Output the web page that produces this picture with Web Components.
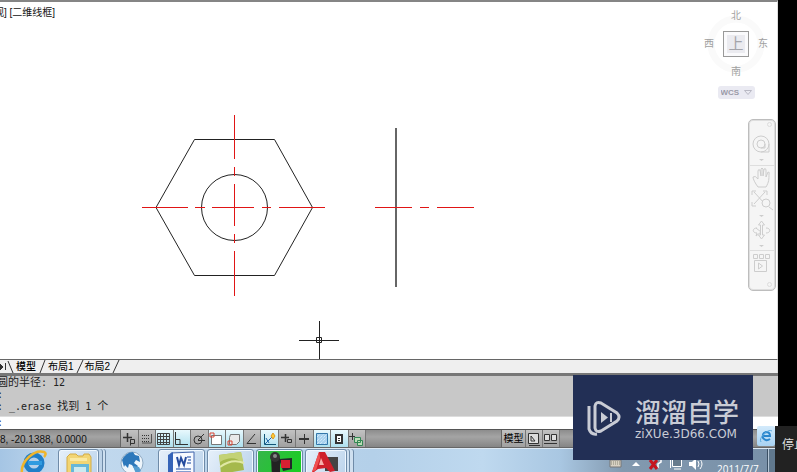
<!DOCTYPE html>
<html lang="zh-CN">
<head>
<meta charset="utf-8">
<title>CAD</title>
<style>
html, body { margin: 0; height: 100%; overflow: hidden; background: #000; }
body { font-family: "Liberation Sans", "Noto Sans CJK SC", sans-serif; font-size: 10px; color: #111; }
</style>
</head>
<body>
<cad-desktop>
  <drawing-view></drawing-view>
  <layout-tabs></layout-tabs>
  <command-panel></command-panel>
  <status-bar></status-bar>
  <task-bar></task-bar>
  <brand-card slot="overlay"></brand-card>
  <browser-badge slot="overlay"></browser-badge>
  <recorder-tip slot="overlay"><button>停止</button></recorder-tip>
</cad-desktop>

<script>
const define = (name, html) => customElements.define(name, class extends HTMLElement {
  constructor() {
    super();
    this.attachShadow({ mode: 'open' }).innerHTML =
      '<style>:host,*{box-sizing:border-box}button,input,select{font:inherit;color:inherit;margin:0;padding:0;border:0;background:none;appearance:none;outline:0}svg{display:block}</style>' + html;
  }
});

define('cad-desktop', `
<style>
:host { display: grid; grid-template-columns: 1fr 19px; height: 100vh; position: relative; overflow: hidden; background: #000; }
main { display: flex; flex-direction: column; min-width: 0; overflow: hidden; }
</style>
<main><slot></slot></main><slot name="overlay"></slot>`);

define('view-cube', `
<style>
:host { display: grid; grid-template-columns: 18px 34px 18px; grid-template-rows: 16px 28px 16px; gap: 6px 1px; place-items: center; position: absolute; top: 6px; right: 5px; width: 72px; color: #a0a0a0; }
svg.ring { position: absolute; left: 7px; top: 7px; }
button { position: relative; line-height: 14px; }
.n, .s { grid-column: 1 / 4; }
.top { width: 26px; height: 26px; border: 1px solid #999; background: #fafafc; display: grid; place-items: center; font-size: 15px; color: #a4a4aa; }
.top span { background: #ebebf0; line-height: 18px; width: 18px; }
label { grid-column: 1 / 4; position: relative; display: block; width: 37px; height: 13px; background: #eaeaf2; border-radius: 3px; }
select { width: 37px; height: 13px; padding-left: 3px; font-size: 8px; font-weight: bold; line-height: 13px; color: #9b9ba8; display: block; }
label svg { position: absolute; right: 3px; top: 3px; pointer-events: none; }
</style>
<svg class="ring" width="58" height="58" fill="none"><circle cx="29" cy="29" r="25" stroke="#fafafa" stroke-width="7"/></svg>
<button class="n">北</button><button>西</button><button class="top"><span>上</span></button><button>东</button><button class="s">南</button>
<label><select aria-label="坐标系"><option>WCS</option></select><svg width="8" height="7" fill="none" stroke="#b9b9c4"><path d="M.5 1.5h7L4 5.5z"/></svg></label>`);

define('nav-bar', `
<style>
:host { display: flex; flex-direction: column; align-items: center; position: absolute; right: 1px; top: 119px; width: 28px; padding: 14px 0 16px; border: 1px solid #bdbdbd; box-shadow: inset 0 0 0 1px #dedede; border-radius: 5px; background: #f5f5f5; }
button { display: block; }
hr { width: 24px; border: 0; border-top: 1px solid #dedede; margin: 0; }
svg { fill: none; stroke: #cdcdcd; }
i { position: absolute; right: 3px; width: 5px; height: 5px; border: 1px solid #ddd; border-radius: 50%; }
i.a { top: 2px; } i.b { bottom: 3px; }
</style>
<i class="a"></i>
<button aria-label="控制盘"><svg width="24" height="20"><circle cx="11" cy="10" r="8"/><circle cx="11" cy="10" r="4"/><path d="M19 10v8h-8M15 10v4h-4"/></svg></button>
<button aria-label="控制盘选项"><svg width="24" height="11"><path d="M9 5h5l-2.500 2z" fill="#ccc" stroke="none"/></svg></button>
<hr>
<button aria-label="平移"><svg width="24" height="23"><path d="M8 21C5 17 3 13 3 11q2-2 5 2V5q0-2 2-1l1 6V3q1-2 2 0v7l1-7q2-1 2 1v7l2-5q2 0 1 2c0 5 0 8-3 13z"/></svg></button>
<button aria-label="缩放"><svg width="24" height="22"><path d="M4 3l11 12M4 15L15 3M2 6V2h4M13 2h4v4M2 13v4h4M19 18l4 3"/><circle cx="16" cy="14" r="4" fill="#f5f5f5"/></svg></button>
<button aria-label="缩放选项"><svg width="24" height="9"><path d="M9 4h5l-2.500 2z" fill="#ccc" stroke="none"/></svg></button>
<button aria-label="动态观察"><svg width="24" height="20"><path d="M11.500 1l3 4h-2v10h2l-3 4-3-4h2V5h-2zM7 8c-5 0-5 5 0 5l-1 3 5-4-5-4M16 8c5 0 5 5 0 5"/></svg></button>
<button aria-label="观察选项"><svg width="24" height="10"><path d="M9 5h5l-2.500 2z" fill="#ccc" stroke="none"/></svg></button>
<hr>
<button aria-label="运动"><svg width="24" height="23"><path d="M3.500 3.500h4v4h-4zM9.500 3.500h4v4h-4zM15.500 3.500h4v4h-4zM4.500 9.500h12v11h-12zM8.500 12v6l4-3z"/></svg></button>
<i class="b"></i>`);

define('drawing-view', `
<style>
:host { display: block; flex: 1; min-height: 0; position: relative; overflow: hidden; background: #fff; border-top: 2px solid #858585; border-right: 1px solid #ddd; }
p { margin: 0; position: absolute; left: -6px; top: 4px; line-height: 14px; white-space: nowrap; }
.sheet { position: absolute; left: 0; top: -2px; width: 100%; height: 361px; fill: none; }
nav-bar { top: 117px; }
</style>
<svg class="sheet" aria-label="六角螺母">
<path d="M194.500 139.500h80l38 68-38 68h-80l-38.500-68z" stroke="#222"/><circle cx="234.500" cy="207.500" r="33" stroke="#222"/>
<path d="M396 128v159" stroke="#666" stroke-width="2"/>
<path d="M142 207.500h46M195 207.500h10M212 207.500h42M262 207.500h9M279 207.500h46" stroke="#e01515"/>
<path d="M234.500 115v44M234.500 167v9M234.500 184v42M234.500 234v9M234.500 251v45" stroke="#e01515"/>
<path d="M375 207.500h37M420 207.500h9M437 207.500h37" stroke="#e01515"/>
<path d="M299 340.500h40M319.500 321v38M316.500 337.500h5v5h-5z" stroke="#222"/>
</svg>
<p>观] [二维线框]</p>
<view-cube></view-cube><nav-bar></nav-bar>`);

define('layout-tabs', `
<style>
:host { display: flex; flex: none; align-items: center; height: 14px; overflow: hidden; background: #efefef; border-top: 1px solid #666; border-right: 1px solid #ddd; }
button { line-height: 13px; white-space: nowrap; color: #000; }
svg { fill: none; stroke: #333; flex: none; }
.first { font-weight: 500; }
</style>
<button aria-label="最后"><svg width="16" height="13"><path d="M0 4l3 3-3 3z" fill="#333"/><path d="M5.500 3v7M8 1l5 12"/></svg></button>
<button class="first">模型</button><svg width="12" height="13"><path d="M4 13L9 0"/></svg>
<button>布局1</button><svg width="11" height="13"><path d="M3 13L9 0"/></svg>
<button>布局2</button><svg width="12" height="13"><path d="M3 13L9 0"/></svg>`);

define('command-panel', `
<style>
:host { display: block; flex: none; border-top: 3px solid #777; font-size: 11px; line-height: 12px; color: #222; }
.log { background: #c8c8c8; height: 40px; overflow: hidden; }
p { margin: 0 0 0 -3px; white-space: pre; height: 12px; }
code { font: 10px/12px "DejaVu Sans Mono", monospace; }
label { display: flex; height: 13px; background: #fff; align-items: center; border-top: 1px solid #ddd; color: #336; }
label code { margin-left: -3px; }
input { flex: 1; min-width: 0; height: 12px; }
</style>
<div class="log"><p>圆的半径<code>: 12</code></p><p><code>:</code></p><p><code>: _.erase </code>找到<code> 1 </code>个</p></div>
<label><code>:</code><input aria-label="命令"></label>`);

define('status-bar', `
<style>
:host { display: flex; flex: none; height: 19px; background: linear-gradient(#8d8d8d, #a4a4a4 40%, #858585); border-top: 1px solid #555; border-bottom: 1px solid #666; color: #111; overflow: hidden; }
output { width: 120px; line-height: 19px; white-space: nowrap; }
.tools { display: grid; grid-template-columns: repeat(14, 1fr); width: 246px; border-left: 1px solid #666; }
button { border-right: 1px solid #777; background: linear-gradient(#c2c2c2, #a0a0a0); display: grid; place-items: center; overflow: hidden; }
button.on { background: linear-gradient(#e8f8fd, #aee0ee); }
svg { fill: none; stroke: #333; }
.space { flex: 1; }
.right { display: flex; margin-right: 218px; border-left: 1px solid #666; }
.right button { width: 17px; } .right .model { width: 24px; color: #000; line-height: 16px; white-space: nowrap; }
</style>
<output>8, -20.1388, 0.0000</output>
<div class="tools">
<button aria-label="推断约束"><svg width="14" height="14"><path d="M1 5.500h9M5.500 1v9" stroke-width="1.500"/><path d="M8.500 7.500h4v4h-4zv6"/></svg></button>
<button aria-label="捕捉"><svg width="14" height="14" stroke-dasharray="1 1"><path d="M2 3.500h8M2 6.500h8M2 9.500h8" /><path d="M11.500 2v9H2" stroke-dasharray="none" stroke="#555"/></svg></button>
<button class="on" aria-label="栅格"><svg width="14" height="14"><path d="M.5 1.500h12v11h-12zM3.500 1v12M6.500 1v12M9.500 1v12M0 4.500h12M0 7.500h12M0 10.500h12" stroke="#444"/></svg></button>
<button class="on" aria-label="正交"><svg width="15" height="14" stroke="#178"><path d="M1.500 0v12.500H14M1 7.500h5v5"/></svg></button>
<button aria-label="极轴"><svg width="14" height="14"><circle cx="6" cy="8" r="4"/><path d="M6 8l6-6M6 8.500h7"/></svg></button>
<button class="on" aria-label="对象捕捉"><svg width="15" height="14"><path d="M2.500 3.500h10v9h-10z" fill="#fff" stroke="#777"/><path d="M1 1h4v4H1z" stroke="#d43"/></svg></button>
<button class="on" aria-label="三维捕捉"><svg width="15" height="14"><path d="M3.500 2.500h9v7l-3 3h-7v-7z" fill="#e9e9e9" stroke="#777"/><path d="M1 9h4v4H1z" stroke="#d43"/></svg></button>
<button aria-label="对象追踪"><svg width="14" height="14"><path d="M10 2L2 11.500h9"/></svg></button>
<button class="on" aria-label="动态坐标"><svg width="15" height="14"><path d="M2.500 2v10.500H14" stroke="#157"/><path d="M3 12l8-8M4 6l3 5" stroke="#26a"/><path d="M11 1l2 3-2 3-2-3z" fill="#fc3" stroke="#d92"/></svg></button>
<button aria-label="动态输入"><svg width="14" height="14"><path d="M1 5.500h8M5.500 2v8" stroke-width="1.500"/><path d="M7.500 7.500h4v3h-4z"/></svg></button>
<button aria-label="线宽"><svg width="14" height="14"><path d="M2 7h10" stroke-width="2"/><path d="M7.500 2v10"/></svg></button>
<button class="on" aria-label="透明度"><svg width="14" height="14"><path d="M1.500 1.500h11v11h-11z" fill="#a9d2ef" stroke="#37a"/><path d="M2 5l3-3M2 9l7-7M2 12L12 2M5 12l7-7M9 12l3-3" stroke="#e7f7ff" stroke-dasharray="1 1"/></svg></button>
<button class="on" aria-label="快捷特性"><svg width="14" height="14"><path d="M4 3h6v8H4z" fill="#fff" stroke-width="2"/><path d="M6 6.500h2M6 8.500h2"/></svg></button>
<button aria-label="选择循环"><svg width="15" height="14"><path d="M0 4.500h6M3.500 1v7"/><path d="M5.500 5.500h6v5h-6zM8.500 8.500h5v5h-5z" fill="#bcdcb7" stroke="#385"/></svg></button>
</div>
<span class="space"></span>
<div class="right"><button class="model">模型</button><button aria-label="布局"><svg width="14" height="14"><path d="M1.500 1.500h10v10h-10z" fill="#ddd"/><path d="M4 4l4 5M4 4v5h4M2 13.500h11"/></svg></button><button aria-label="快速查看"><svg width="14" height="14"><path d="M.5 2.500h5v6h-5zM7.500 2.500h5v6h-5z" fill="#ddd"/><path d="M0 11.500h13"/></svg></button></div>`);

define('task-bar', `
<style>
:host { display: flex; flex: none; height: 24px; overflow: hidden; background: linear-gradient(90deg, #a5c5e4 0, #c2d9ee 8%, #b4d0e9 48%, #bfd9ef 62%, #a9c7e2 72%, #8299af 80%, #7890a8); border-top: 1px solid #dce9f5; }
nav { display: flex; gap: 2px; padding-left: 10px; }
button { height: 36px; width: 47px; display: flex; justify-content: center; flex: none; }
.app { border: 1px solid #6f8ba8; border-radius: 3px; box-shadow: inset 0 0 0 1px #eff7ff; background: linear-gradient(120deg, #e6f0fa, #b8d1ea); }
.folder { width: 41px; margin-left: -1px; box-shadow: inset 0 0 0 1px #eff7ff, 3px 0 #bdd3e8, 4px 0 #6f8ba8, 6px 0 #cfe0f0, 7px 0 #6f8ba8; }
.globe { margin: 0 1px 0 7px; }
.rec { background: linear-gradient(120deg, #37b54b, #14d21c); }
.cad { width: 42px; box-shadow: inset 0 0 0 1px #eff7ff, 2px 0 #cfe0f0, 3px 0 #6f8ba8, 6px 0 #cfe0f0, 7px 0 #6f8ba8; }
aside { margin-left: auto; display: flex; color: #fff; }
.tray { width: 20px; height: 24px; }
time { width: 62px; padding: 14px 0 0 12px; font: 10px/12px "Open Sans", sans-serif; white-space: nowrap; }
.show { width: 11px; background: #60788d; border-left: 1px solid #3b5064; box-shadow: inset 1px 0 #b7c8d8; }
</style>
<nav>
<button aria-label="Internet Explorer"><svg width="30" height="30"><circle cx="15" cy="14" r="8" fill="none" stroke="#1f7fc9" stroke-width="5"/><path d="M9 14h14" stroke="#2f9be0" stroke-width="4"/><path d="M3 25C1 12 16 0 25 3c3 1 1 4 0 5" fill="none" stroke="#efb52c" stroke-width="2.500"/></svg></button>
<button class="app folder" aria-label="资源管理器"><svg width="28" height="30"><path d="M2 7l3-3h6l2 2h5l1-2h5l2 3v22H2z" fill="#f2d574" stroke="#d3ab45"/><path d="M5 8h17v3H5z" fill="#fae9a2"/><path d="M6 14h18v14H6z" fill="#66b7d9"/><path d="M9 17h12v9H9z" fill="#cceaf0"/></svg></button>
<button class="globe" aria-label="浏览器"><svg width="28" height="28"><circle cx="14" cy="14" r="11" fill="#eef5fb" stroke="#8ea9c2"/><path d="M4 11q4-8 11-8l2 3 4 1 1 6-4-2-2 3 4 3-3 4-3-5-3-1-1 4-3-3-1 2z" fill="#2d78bb"/><path d="M15 17l6 1 2 4-5 3z" fill="#559cd0"/></svg></button>
<button class="app" aria-label="Word"><svg width="30" height="28"><path d="M4 3l23-1v25H4z" fill="#f7faff" stroke="#4466ad"/><path d="M1 5l5-3v25H1z" fill="#3564b8"/><path d="M10 7l2 8 2-7 3 7 2-8" fill="none" stroke="#244b9e" stroke-width="2"/><path d="M20 7h4M21 10h3M20 13h4M9 19h15M9 22h15" stroke="#5d7fc0" stroke-width="1.500"/></svg></button>
<button class="app" aria-label="Camtasia"><svg width="30" height="28"><path d="M3 5l22-3 3 18-23 4z" fill="#a5b94c"/><path d="M4 12Q17 4 27 13v-3L25 2 3 5z" fill="#c3d276"/><path d="M4 17q12-9 24-4" stroke="#e0e8a4" stroke-width="2" fill="none"/></svg></button>
<button class="app rec" aria-label="录制"><svg width="32" height="28"><path d="M7 6l9 2v20H8z" fill="#222"/><circle cx="11" cy="7" r="5" fill="#333"/><circle cx="11" cy="6" r="2" fill="#888"/><path d="M15 9l13-1v11l-9 2z" fill="#23282a"/><path d="M17 10h9v8h-9z" fill="#d62032"/></svg></button>
<button class="app cad" aria-label="AutoCAD"><svg width="32" height="28"><path d="M15 7h13v14H15z" fill="#444"/><path d="M9 2h6l10 19-5 1-4-4-8 1-4 3H2z" fill="#cf202b"/><path d="M11 8l-2 7h5z" fill="#f8b0ac"/><path d="M9 2L2 22l4-2 4-12z" fill="#f05050"/></svg></button>
</nav>
<aside>
<button class="tray" aria-label="键盘"><svg width="20" height="24"><path d="M5 11h11v7H5z" fill="#d9d2c4" stroke="#777"/><path d="M6 13h9M6 15h9" stroke="#887" stroke-dasharray="1 1"/></svg></button>
<button class="tray" aria-label="更多"><svg width="20" height="24"><path d="M7 17l4-4 4 4z" fill="#fff"/></svg></button>
<button class="tray" aria-label="网络断开"><svg width="20" height="24"><path d="M11 9h5v4l-3 2v4M12 7v3M15 7v3" stroke="#fff" stroke-width="1.500" fill="none"/><path d="M5 11l7 9M12 11l-7 9" stroke="#c51420" stroke-width="3"/></svg></button>
<button class="tray" aria-label="网络"><svg width="20" height="24"><path d="M7.500 10.500h9v7h-9z" fill="#667b8d" stroke="#fff"/><path d="M9 20h7M5.500 9v10M3 9h5" stroke="#fff"/></svg></button>
<button class="tray" aria-label="音量"><svg width="20" height="24"><path d="M4 13h3l4-4v12l-4-4H4z" fill="#fff"/><path d="M13 12q2 3 0 6M15 10q4 5 0 10" stroke="#fff" fill="none"/></svg></button>
<time>2011/7/7</time><button class="show" aria-label="显示桌面"></button>
</aside>`);

define('brand-card', `
<style>
:host { display: flex; align-items: center; gap: 12px; position: absolute; right: 44px; bottom: 12px; width: 180px; height: 85px; padding-left: 14px; background: #222f55; color: #c9ccd5; }
svg { fill: none; stroke: #c9ccd5; flex: none; }
div { display: grid; gap: 2px; }
strong { font: 500 26px/30px "Noto Sans CJK SC", sans-serif; white-space: nowrap; }
span { font: 12px/12px "DejaVu Sans", sans-serif; white-space: nowrap; }
</style>
<svg width="36" height="38"><path d="M2 7v23q2 6 8 5M8 7q1-5 6-3l16 10q4 4 0 8L14 32q-5 2-6-3z" stroke-width="3"/><path d="M14 13v11l7-5.500z" fill="#c9ccd5" stroke="none"/><path d="M24 14v9" stroke-width="2"/></svg>
<div><strong>溜溜自学</strong><span>ziXUe.3D66.COM</span></div>`);

define('browser-badge', `
<style>
:host { position: absolute; right: 22px; bottom: 26px; width: 18px; height: 20px; background: linear-gradient(#d3eafb, #a8d2f2); border-radius: 2px; }
button { width: 18px; height: 20px; display: grid; place-items: center; }
svg { fill: none; stroke: #2b86cd; }
</style>
<button aria-label="IE"><svg width="14" height="14"><path d="M11 10q-4 3-7-1-1-5 3-6 4 0 4 4H5" stroke-width="2"/><path d="M2 13Q0 10 5 5q5-5 8-3" stroke="#5ba9df"/></svg></button>`);

define('recorder-tip', `
<style>
:host { display: flex; align-items: center; position: absolute; right: 0; bottom: 0; width: 22px; height: 46px; padding: 0 0 12px 7px; overflow: hidden; background: #222; color: #ddd; font-size: 12px; }
::slotted(button) { font: inherit; color: inherit; background: none; border: 0; padding: 0; white-space: nowrap; flex: none; }
</style><slot></slot>`);
</script>
</body>
</html>
